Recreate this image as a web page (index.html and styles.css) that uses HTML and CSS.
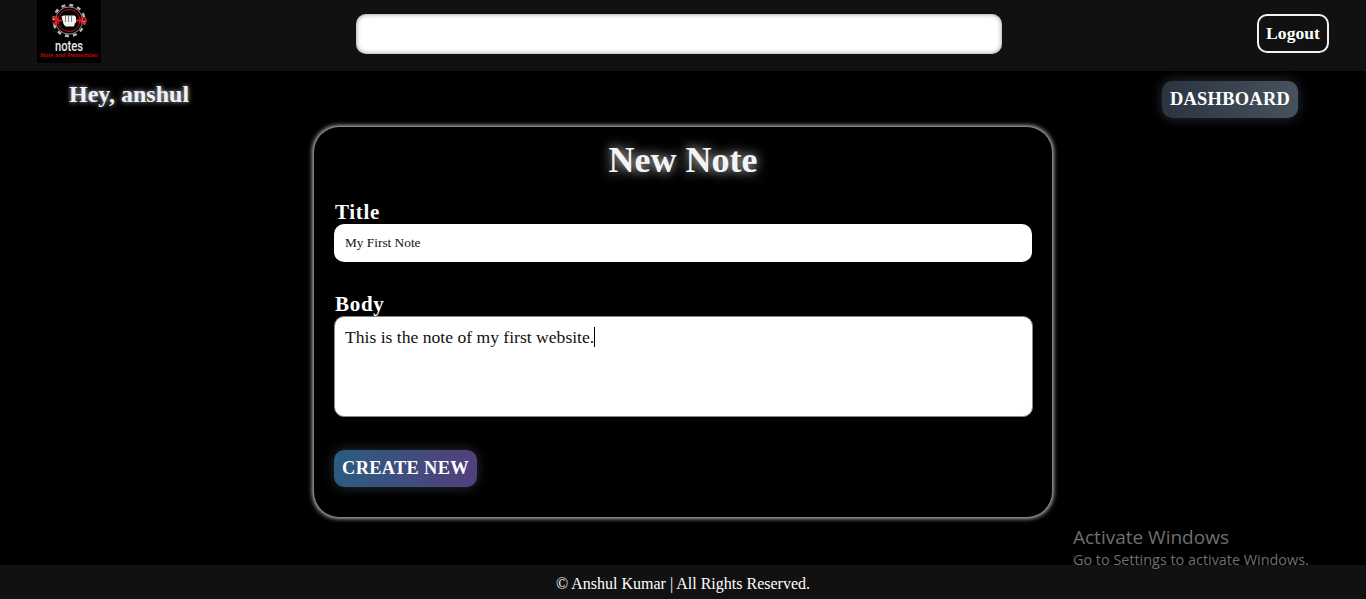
FILE: index.html
```html
<!DOCTYPE html>
<html lang="en">
<head>
<meta charset="utf-8">
<title>Notes</title>
<link rel="stylesheet" href="styles.css">
</head>
<body>
<header class="topbar">
  <div class="logo">
    <svg class="logo-svg" viewBox="0 0 64 63" width="64" height="63" aria-hidden="true">
      <rect width="64" height="63" fill="#000"/>
      <circle cx="32" cy="20.5" r="15.5" fill="none" stroke="#b5b5b5" stroke-width="2.4" stroke-dasharray="4 4.1"/>
      <circle cx="32" cy="20.5" r="13.6" fill="none" stroke="#bbb" stroke-width="0.8"/>
      <circle cx="32" cy="20.5" r="11" fill="#000" stroke="#c8101a" stroke-width="1"/>
      <path d="M19 20.500h6M39 20.500h5" stroke="#e8141c" stroke-width="2.200"/>
      <path d="M21 17.500l-3.500-1.300a4.500 4.500 0 0 0-2.500 2.500h3v3.600h-3a4.500 4.500 0 0 0 2.500 2.500l3.500-1.300z" fill="#e8141c"/>
      <circle cx="46.500" cy="20.500" r="2.600" fill="none" stroke="#e8141c" stroke-width="1.600"/>
      <path d="M24.500 16.500l2-1h11l1.500 1.500v6h-1l-1 3.500h-8.500l-2-2.500z" fill="#f2f2f2"/>
      <path d="M28.500 16v6M31.500 16v6M34.500 16v6" stroke="#555" stroke-width="0.700"/>
      <text class="logo-word" x="32" y="51" textLength="28" lengthAdjust="spacingAndGlyphs">notes</text>
      <text class="logo-tag" x="32" y="57" textLength="58" lengthAdjust="spacingAndGlyphs">Note and Remember</text>
    </svg>
  </div>
  <div class="search"></div>
  <a class="logout">Logout</a>
</header>
<main class="page">
  <div class="greet-row">
    <h2 class="greeting">Hey, anshul</h2>
    <a class="dash">DASHBOARD</a>
  </div>
  <section class="card">
    <h1 class="card-title">New Note</h1>
    <label class="field-label">Title</label>
    <div class="title-input">My First Note</div>
    <label class="field-label body-label">Body</label>
    <div class="body-input">This is the note of my first website.<span class="caret"></span></div>
    <a class="create">CREATE NEW</a>
  </section>
</main>
<footer class="foot">© Anshul Kumar | All Rights Reserved.</footer>
<div class="activate">
  <div class="activate-big">Activate Windows</div>
  <div class="activate-small">Go to Settings to activate Windows.</div>
</div>
</body>
</html>
```
FILE: styles.css
```css
* { box-sizing: border-box; }
html, body { margin: 0; height: 599px; overflow: hidden; }
body {
  background: #000;
  color: #fff;
  font-family: "Liberation Serif", "Times New Roman", serif;
  display: flex;
  flex-direction: column;
  position: relative;
}
.topbar {
  height: 71px;
  background: #111;
  display: flex;
  align-items: flex-start;
  padding: 0 37px;
  flex: none;
}
.logo { width: 64px; height: 63px; }
.logo-svg { display: block; }
.logo-word {
  font-family: "Roboto", sans-serif;
  font-size: 14px;
  font-weight: 500;
  fill: #e8e8e8;
  text-anchor: middle;
}
.logo-tag {
  font-family: "Liberation Sans", sans-serif;
  font-size: 5.8px;
  font-weight: 700;
  font-style: italic;
  fill: #c80000;
  text-anchor: middle;
}
.search {
  width: 646px;
  height: 40px;
  margin: 14px 0 0 255px;
  background: #fff;
  border-radius: 10px;
  box-shadow: inset 0 0 5px rgba(0, 0, 0, 0.45);
}
.logout {
  width: 72px;
  height: 39px;
  margin: 14px 0 0 255px;
  border: 2px solid #f2f2f2;
  border-radius: 10px;
  font-size: 17.6px;
  font-weight: 700;
  display: flex;
  align-items: center;
  justify-content: center;
}
.page { flex: 1; position: relative; min-height: 0; }
.greet-row {
  display: flex;
  justify-content: space-between;
  align-items: flex-start;
  padding: 10px 68px 0 69px;
  height: 56px;
}
.greeting {
  margin: 0;
  font-size: 24px;
  line-height: 27px;
  font-weight: 700;
  color: #eef2fb;
  text-shadow: 0 0 5px rgba(255, 255, 255, 0.75);
}
.dash {
  width: 136px;
  height: 37px;
  border-radius: 10px;
  background: linear-gradient(90deg, #2b3440, #47525f);
  box-shadow: 0 0 12px rgba(120, 140, 170, 0.35);
  font-size: 18.4px;
  font-weight: 700;
  letter-spacing: 0.3px;
  display: flex;
  align-items: center;
  justify-content: center;
}
.card {
  width: 738px;
  height: 390px;
  margin: 0 0 0 314px;
  padding: 10px 20px 0;
  background: #000;
  border-radius: 25px;
  box-shadow: 0 0 5px 0.5px rgba(255, 255, 255, 0.9);
  display: flex;
  flex-direction: column;
  align-items: flex-start;
}
.card-title {
  align-self: stretch;
  margin: 0;
  height: 64px;
  text-align: center;
  font-size: 36px;
  line-height: 46px;
  font-weight: 700;
  color: #f4f4f4;
  text-shadow: 0 0 12px rgba(255, 255, 255, 0.85);
}
.field-label {
  display: block;
  height: 23px;
  padding-left: 1px;
  font-size: 21px;
  line-height: 23px;
  font-weight: 700;
  letter-spacing: 0.7px;
}
.title-input {
  width: 698px;
  height: 38px;
  background: #fff;
  color: #111;
  border-radius: 10px;
  font-size: 13.33px;
  line-height: 38px;
  padding-left: 11px;
}
.body-label { margin-top: 31px; }
.body-input {
  width: 699px;
  height: 101px;
  background: #fff;
  color: #111;
  border: 1px solid #888;
  border-radius: 10px;
  font-size: 17.6px;
  line-height: 22px;
  padding: 9px 10px;
}
.caret {
  display: inline-block;
  width: 1px;
  height: 20px;
  background: #000;
  vertical-align: -4px;
}
.create {
  width: 143px;
  height: 37px;
  margin-top: 33px;
  border-radius: 10px;
  background: linear-gradient(90deg, #2b5c80, #533f7c);
  box-shadow: 0 0 12px rgba(120, 140, 170, 0.35);
  font-size: 18.4px;
  font-weight: 700;
  letter-spacing: 0.3px;
  display: flex;
  align-items: center;
  justify-content: center;
}
.foot {
  height: 34px;
  flex: none;
  background: #111;
  text-align: center;
  font-size: 16px;
  line-height: 37px;
}
.activate {
  position: absolute;
  left: 1073px;
  top: 525px;
  color: #6f6f6f;
  font-family: "Open Sans", sans-serif;
}
.activate-big { font-size: 19px; line-height: 25px; }
.activate-small { font-size: 14.4px; line-height: 20px; }
```
